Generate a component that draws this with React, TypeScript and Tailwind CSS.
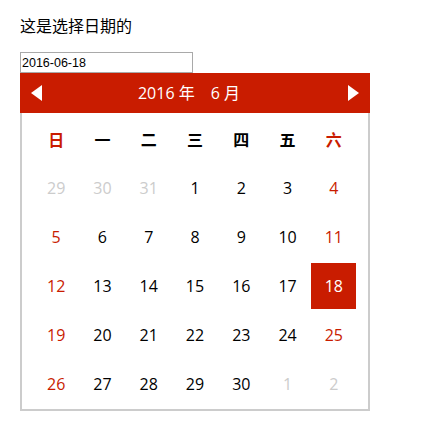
import { useState } from 'react';

const weekNames = ['日', '一', '二', '三', '四', '五', '六'];

interface Day {
  n: number;
  other?: boolean;
}

const days: Day[] = [
  { n: 29, other: true }, { n: 30, other: true }, { n: 31, other: true },
  ...Array.from({ length: 30 }, (_, i) => ({ n: i + 1 })),
  { n: 1, other: true }, { n: 2, other: true },
];

export default function App() {
  const [selected, setSelected] = useState(18);

  const dayColor = (d: Day, idx: number) => {
    if (d.other) return 'text-[#cccccc]';
    const col = idx % 7;
    if (col === 0 || col === 6) return 'text-[#c91c00]';
    return 'text-black';
  };

  return (
    <div className="min-h-screen bg-white pl-5 pt-[13px]" style={{ fontFamily: '"Open Sans", "Noto Sans CJK SC", sans-serif' }}>
      <p className="text-base leading-6 text-black" style={{ fontFamily: '"Noto Sans CJK SC", sans-serif' }}>
        这是选择日期的
      </p>

      <input
        readOnly
        value={`2016-06-${String(selected).padStart(2, '0')}`}
        className="mt-[15px] block h-[21px] w-[173px] border border-[#a9a9a9] px-px text-[12.5px] text-black outline-none"
        style={{ fontFamily: '"Liberation Sans", Arial, sans-serif' }}
      />

      <div className="w-[350px]">
        {/* Header */}
        <div className="flex h-10 items-center bg-[#c91c00] px-[11px] text-white">
          <svg className="h-4 w-[11px]" viewBox="0 0 11 16">
            <polygon points="11,0 11,16 0,8" fill="#ffffff" />
          </svg>
          <div className="flex flex-1 justify-center pr-3 text-base">
            <span>2016 年</span>
            <span className="ml-4">6 月</span>
          </div>
          <svg className="h-4 w-[11px]" viewBox="0 0 11 16">
            <polygon points="0,0 0,16 11,8" fill="#ffffff" />
          </svg>
        </div>

        {/* Body */}
        <div className="border-2 border-t-0 border-[#cccccc] px-[11px] py-px">
          <div className="grid grid-cols-7">
            {weekNames.map((w, i) => (
              <div
                key={w}
                className={`flex h-[49px] items-center justify-center text-base font-bold ${i === 0 || i === 6 ? 'text-[#c91c00]' : 'text-black'}`}
                style={{ fontFamily: '"Noto Sans CJK SC", sans-serif' }}
              >
                {w}
              </div>
            ))}
            {days.map((d, i) => (
              <div key={i} className="flex h-[49px] items-center justify-center">
                {!d.other && d.n === selected ? (
                  <span className="flex h-[46px] w-[45px] items-center justify-center bg-[#c91c00] text-base text-white">
                    {d.n}
                  </span>
                ) : (
                  <span
                    onClick={() => !d.other && setSelected(d.n)}
                    className={`cursor-pointer text-base ${dayColor(d, i)}`}
                  >
                    {d.n}
                  </span>
                )}
              </div>
            ))}
          </div>
        </div>
      </div>
    </div>
  );
}
